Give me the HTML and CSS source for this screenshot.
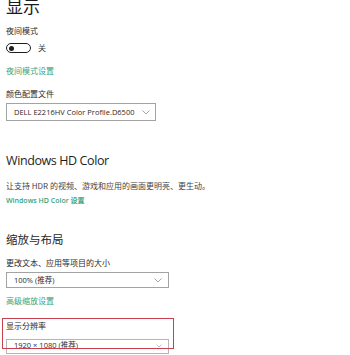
FILE: index.html
```html
<!DOCTYPE html>
<html lang="zh">
<head>
<meta charset="utf-8">
<link rel="stylesheet" href="styles.css">
</head>
<body>
<div class="page">
  <h1 class="title">显示</h1>
  <div class="label l-night">夜间模式</div>
  <div class="toggle-row">
    <span class="toggle"><span class="knob"></span></span>
    <span class="toggle-text">关</span>
  </div>
  <div class="link l-night-link">夜间模式设置</div>
  <div class="label l-profile">颜色配置文件</div>
  <div class="select s-profile">
    <span class="select-text">DELL E2216HV Color Profile.D6500</span>
    <svg class="chev" width="8" height="5" viewBox="0 0 8 5"><path d="M0.5 0.5 L4 4 L7.5 0.5" fill="none" stroke="#9a9a9a" stroke-width="0.9"/></svg>
  </div>
  <h2 class="heading h-hd">Windows HD Color</h2>
  <div class="desc">让支持 HDR 的视频、游戏和应用的画面更明亮、更生动。</div>
  <div class="link l-hd-link">Windows HD Color 设置</div>
  <h2 class="heading h-scale">缩放与布局</h2>
  <div class="label l-size">更改文本、应用等项目的大小</div>
  <div class="select s-scale">
    <span class="select-text">100% (推荐)</span>
    <svg class="chev" width="8" height="5" viewBox="0 0 8 5"><path d="M0.5 0.5 L4 4 L7.5 0.5" fill="none" stroke="#9a9a9a" stroke-width="0.9"/></svg>
  </div>
  <div class="link l-adv">高级缩放设置</div>
  <div class="res-block">
    <div class="label l-res">显示分辨率</div>
    <div class="select s-res">
      <span class="select-text res-text">1920 × 1080 (推荐)</span>
      <svg class="chev" width="6" height="4" viewBox="0 0 6 4"><path d="M0.5 0.5 L3 3 L5.5 0.5" fill="none" stroke="#b0b0b0" stroke-width="0.8"/></svg>
    </div>
    <div class="highlight"></div>
  </div>
</div>
</body>
</html>
```

FILE: styles.css
```css
* { box-sizing: border-box; }
html, body { margin: 0; padding: 0; background: #fff; }
body {
  width: 350px;
  height: 355px;
  overflow: hidden;
  font-family: "Noto Sans CJK SC", "Open Sans", sans-serif;
  color: #222;
}
.page {
  padding: 0 0 0 6px;
  display: flex;
  flex-direction: column;
  align-items: flex-start;
}
.title {
  margin: -5px 0 0 0;
  font-size: 17px;
  line-height: 22px;
  font-weight: 400;
  color: #1a1a1a;
}
.label {
  font-size: 8px;
  line-height: 10px;
  color: #2a2a2a;
}
.l-night { margin-top: 9px; }
.toggle-row {
  display: flex;
  align-items: center;
  margin-top: 7px;
  height: 10px;
}
.toggle {
  width: 25px;
  height: 10px;
  border: 1.4px solid #1e1e1e;
  border-radius: 6px;
  display: flex;
  align-items: center;
  padding-left: 2px;
}
.knob {
  width: 5px;
  height: 5px;
  border-radius: 50%;
  background: #1e1e1e;
}
.toggle-text {
  margin-left: 7px;
  font-size: 8px;
  line-height: 10px;
  color: #444;
}
.link {
  font-size: 8px;
  line-height: 10px;
  color: #35a47b;
}
.l-night-link { margin-top: 13px; }
.l-profile { margin-top: 13px; }
.select {
  display: flex;
  align-items: center;
  justify-content: space-between;
  border: 1px solid #a3a3a3;
  background: #fff;
}
.select-text {
  font-family: "Open Sans", "Noto Sans CJK SC", sans-serif;
  font-size: 7.5px;
  color: #2a2a2a;
  line-height: 10px;
}
.s-profile {
  width: 150px;
  height: 18px;
  margin-top: 4px;
  padding: 0 5px 0 7px;
}
.heading {
  margin: 0;
  font-weight: 400;
  font-size: 12.5px;
  line-height: 16px;
  color: #1e1e1e;
  font-family: "Open Sans", "Noto Sans CJK SC", sans-serif;
}
.h-hd { margin-top: 32px; letter-spacing: -0.4px; }
.desc {
  margin-top: 12px;
  font-size: 8px;
  line-height: 10px;
  color: #444;
}
.l-hd-link {
  margin-top: 5px;
  font-family: "Open Sans", "Noto Sans CJK SC", sans-serif;
  font-weight: 600;
  font-size: 7px;
}
.h-scale {
  margin-top: 25px;
  font-family: "Noto Sans CJK SC", sans-serif;
  font-size: 11.5px;
  line-height: 16px;
}
.l-size { margin-top: 11px; }
.s-scale {
  width: 163px;
  height: 16px;
  margin-top: 4px;
  padding: 0 6px 0 7px;
}
.l-adv { margin-top: 8px; }
.res-block {
  position: relative;
  margin-top: 12px;
  display: flex;
  flex-direction: column;
  align-items: flex-start;
}
.l-res { margin-top: 3px; }
.s-res {
  width: 163px;
  height: 15px;
  margin-top: 8px;
  padding: 1px 6px 3px 7px;
  border-color: #b5b5b5;
}
.res-text { line-height: 9px; }
.highlight {
  position: absolute;
  left: -4px;
  top: 0;
  width: 172px;
  height: 31px;
  border: 1.5px solid #c8404e;
  pointer-events: none;
}
```
